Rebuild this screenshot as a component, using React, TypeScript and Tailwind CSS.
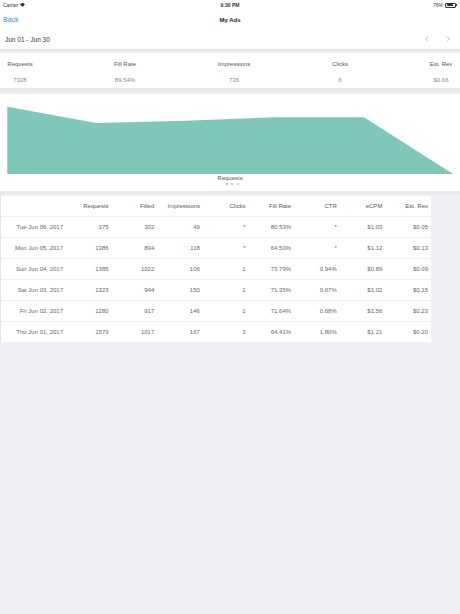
import React from "react";

const rows = [
  ["Tue Jun 06, 2017", "375", "302", "49", "*", "80.53%", "*", "$1.03", "$0.05"],
  ["Mon Jun 05, 2017", "1386", "894", "118", "*", "64.50%", "*", "$1.12", "$0.13"],
  ["Sun Jun 04, 2017", "1385", "1022", "106", "1", "73.79%", "0.94%", "$0.89", "$0.09"],
  ["Sat Jun 03, 2017", "1323", "944", "150", "1", "71.35%", "0.67%", "$1.02", "$0.15"],
  ["Fri Jun 02, 2017", "1280", "917", "146", "1", "71.64%", "0.68%", "$1.56", "$0.23"],
  ["Thu Jun 01, 2017", "1579", "1017", "167", "3", "64.41%", "1.80%", "$1.21", "$0.20"],
];

const headers = ["", "Requests", "Filled", "Impressions", "Clicks", "Fill Rate", "CTR", "eCPM", "Est. Rev"];

const stats = [
  { label: "Requests", value: "7328", ml: "ml-0" },
  { label: "Fill Rate", value: "89.54%", ml: "ml-[65px]" },
  { label: "Impressions", value: "736", ml: "ml-[69px]" },
  { label: "Clicks", value: "6", ml: "ml-[66px]" },
  { label: "Est. Rev", value: "$0.66", ml: "ml-[61px]" },
];

export default function App() {
  return (
    <div className="w-[460px] h-[614px] bg-[#efeff4] font-['Liberation_Sans',Arial,sans-serif] overflow-hidden">
      <div className="bg-white">
        {/* status bar */}
        <div className="h-[10px] flex items-center justify-between px-[3px] text-[5px] leading-[5px] text-[#333] relative">
          <div className="flex items-center gap-[2px]">
            <span>Carrier</span>
            <svg width="5" height="4" viewBox="0 0 10 8">
              <path d="M5 8 L0 2.5 A7 7 0 0 1 10 2.5 Z" fill="#333" />
            </svg>
          </div>
          <span className="absolute left-1/2 -translate-x-1/2 font-bold">9:30 PM</span>
          <div className="flex items-center gap-[2px]">
            <span>76%</span>
            <div className="flex items-center">
              <div className="w-[11px] h-[5px] border-[0.5px] border-[#333] rounded-[1px] p-[0.5px] flex">
                <div className="w-[76%] bg-[#333] rounded-[0.5px]" />
              </div>
              <div className="w-[1px] h-[2px] bg-[#333]" />
            </div>
          </div>
        </div>
        {/* nav */}
        <div className="h-[19px] flex items-center px-[3px] relative">
          <span className="text-[7px] leading-[7px] text-[#3a82f6]">Back</span>
          <span className="absolute left-1/2 -translate-x-1/2 text-[6px] leading-[6px] text-[#222] font-semibold">My Ads</span>
        </div>
        {/* date row */}
        <div className="h-[20px] flex items-center justify-between pl-[5px] pr-[10px]">
          <span className="text-[6.5px] leading-[7px] text-[#333]">Jun 01 - Jun 30</span>
          <div className="flex items-center gap-[17px]">
            <svg width="4" height="6" viewBox="0 0 4 6">
              <path d="M3 0.5 L0.8 3 L3 5.5" fill="none" stroke="#8e8e93" strokeWidth="0.6" />
            </svg>
            <svg width="4" height="6" viewBox="0 0 4 6">
              <path d="M1 0.5 L3.2 3 L1 5.5" fill="none" stroke="#8e8e93" strokeWidth="0.6" />
            </svg>
          </div>
        </div>
      </div>
      <div className="h-[4px] bg-gradient-to-b from-[#e6e6ea] to-[#efeff4]" />
      {/* stats */}
      <div className="h-[35px] bg-white flex items-start pt-[8px] overflow-hidden">
        {stats.map((s) => (
          <div key={s.label} className={`${s.ml} w-[40px] shrink-0 flex flex-col items-center`}>
            <span className="text-[6px] leading-[6px] text-[#555] whitespace-nowrap">{s.label}</span>
            <span className="mt-[10px] text-[6px] leading-[6px] text-[#888] whitespace-nowrap">{s.value}</span>
          </div>
        ))}
      </div>
      <div className="h-[6px] bg-gradient-to-b from-[#e6e6ea] to-[#efeff4]" />
      {/* chart */}
      <div className="h-[97px] bg-white flex flex-col items-center">
        <svg width="460" height="81" viewBox="0 0 460 81" className="shrink-0">
          <polygon
            points="7.3,12.7 96.4,29 185.6,26.7 274.8,23.3 364,23.3 453,80 7.3,80"
            fill="#80c7bb"
          />
        </svg>
        <span className="text-[6px] leading-[6px] text-[#555]">Requests</span>
        <div className="mt-[1px] ml-[4px] flex items-center gap-[3.5px] h-[3px]">
          <div className="w-[2px] h-[2px] rounded-full bg-[#9a9a9a]" />
          <div className="w-[2px] h-[2px] rounded-full bg-[#bbb]" />
          <div className="w-[2px] h-[2px] rounded-full bg-[#bbb]" />
        </div>
      </div>
      <div className="h-[5px] bg-gradient-to-b from-[#e6e6ea] to-[#efeff4]" />
      {/* table */}
      <div className="w-[431px] bg-white border-l border-[#e4e4e4]">
        <div className="grid grid-cols-[65px_repeat(8,45.625px)] h-[20px]">
          {headers.map((h, i) => (
            <div key={i} className="flex items-center justify-end pr-[3px] text-[6px] leading-[6px] text-[#555] whitespace-nowrap">
              {h}
            </div>
          ))}
        </div>
        {rows.map((r, ri) => (
          <div key={ri} className="grid grid-cols-[65px_repeat(8,45.625px)] h-[21px] border-t border-[#efefef]">
            {r.map((c, ci) => (
              <div key={ci} className="flex items-center justify-end pr-[3px] text-[6px] leading-[6px] text-[#666] whitespace-nowrap">
                {c}
              </div>
            ))}
          </div>
        ))}
      </div>
    </div>
  );
}
